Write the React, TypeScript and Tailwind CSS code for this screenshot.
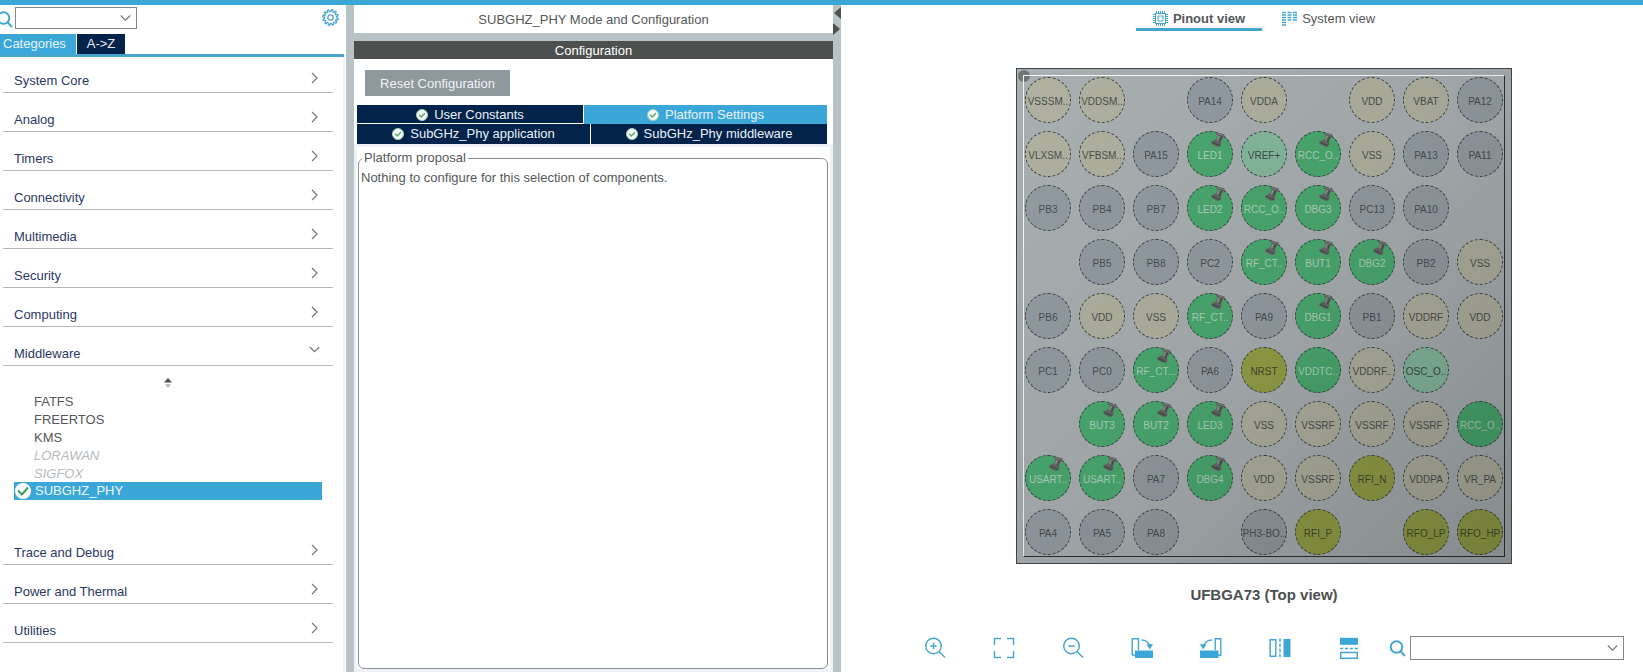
import { useState } from 'react';

const font = "font-['Liberation_Sans',Arial,sans-serif]";

const categoriesBefore = ['System Core', 'Analog', 'Timers', 'Connectivity', 'Multimedia', 'Security', 'Computing'];
const categoriesAfter = ['Trace and Debug', 'Power and Thermal', 'Utilities'];

// kind: g = gpio, p = power, a = assigned, s = special, n = no mode, trailing * = pinned
const pinRows = [
    ['p VSSSM..', 'p VDDSM..', '', 'g PA14', 'p VDDA', '', 'p VDD', 'p VBAT', 'g PA12'],
    ['p VLXSM..', 'p VFBSM..', 'g PA15', 'a* LED1', 's VREF+', 'a* RCC_O..', 'p VSS', 'g PA13', 'g PA11'],
    ['g PB3', 'g PB4', 'g PB7', 'a* LED2', 'a* RCC_O..', 'a* DBG3', 'g PC13', 'g PA10', ''],
    ['', 'g PB5', 'g PB8', 'g PC2', 'a* RF_CT..', 'a* BUT1', 'a* DBG2', 'g PB2', 'p VSS'],
    ['g PB6', 'p VDD', 'p VSS', 'a* RF_CT..', 'g PA9', 'a* DBG1', 'g PB1', 'p VDDRF', 'p VDD'],
    ['g PC1', 'g PC0', 'a* RF_CT...', 'g PA6', 'n NRST', 'a VDDTC..', 'p VDDRF..', 's OSC_O..', ''],
    ['', 'a* BUT3', 'a* BUT2', 'a* LED3', 'p VSS', 'p VSSRF', 'p VSSRF', 'p VSSRF', 'a RCC_O..'],
    ['a* USART..', 'a* USART..', 'g PA7', 'a* DBG4', 'p VDD', 'p VSSRF', 'n RFI_N', 'p VDDPA', 'p VR_PA'],
    ['g PA4', 'g PA5', 'g PA8', '', 'g PH3-BO..', 'n RFI_P', '', 'n RFO_LP', 'n RFO_HP'],
];

const pinStyles: Record<string, string> = {
    g: 'bg-[#99a2a9] text-[#4b5256]',
    p: 'bg-[#b7b8a6] text-[#50534e]',
    a: 'bg-[#4db073] text-[#b9d8c4]',
    s: 'bg-[#8ac0a3] text-[#3f5148]',
    n: 'bg-[#9aa64a] text-[#484e30]',
};

function gearPath(teeth: number) {
    const points: string[] = [];
    for (let i = 0; i < teeth; i++) {
        const start = (i / teeth) * Math.PI * 2;
        const step = (Math.PI * 2) / teeth;
        [
            [0.08, 6],
            [0.22, 7.8],
            [0.58, 7.8],
            [0.72, 6],
        ].forEach(([t, r]) => {
            const angle = start + step * t;
            points.push(`${(8.5 + Math.cos(angle) * r).toFixed(2)} ${(8.5 + Math.sin(angle) * r).toFixed(2)}`);
        });
    }
    return `M${points.join('L')}Z`;
}

function SearchIcon() {
    return (
        <svg viewBox="0 0 17 17" className="size-[17px] shrink-0" fill="none" stroke="#45a5cf" strokeWidth="2">
            <circle cx="7.5" cy="7" r="5.8" />
            <path d="M11.6 11.4 16 16" />
        </svg>
    );
}

function ChevronRight() {
    return (
        <svg viewBox="0 0 7 12" className="h-3 w-[7px]" fill="none" stroke="#777" strokeWidth="1.2">
            <path d="M1 1l5 5-5 5" />
        </svg>
    );
}

function ChevronDown() {
    return (
        <svg viewBox="0 0 11 7" className="h-[7px] w-[11px]" fill="none" stroke="#777" strokeWidth="1.2">
            <path d="M.8 1l4.7 4.7L10.2 1" />
        </svg>
    );
}

function Combo({ label, className }: { label: string; className: string }) {
    return (
        <div className={`relative ${className}`}>
            <select aria-label={label} className="block size-full appearance-none border border-[#858585] bg-white px-2 outline-none">
                <option value=""></option>
            </select>
            <span className="pointer-events-none absolute top-1/2 right-1.5 -translate-y-1/2">
                <ChevronDown />
            </span>
        </div>
    );
}

function CheckBadge() {
    return (
        <svg viewBox="0 0 12 12" className="size-3 shrink-0">
            <circle cx="6" cy="6" r="5.5" fill="#f4fbf4" stroke="#9fd0b4" strokeWidth="1" />
            <path d="M3.2 5.8l2.1 2.2 3.6-3.8" fill="none" stroke="#5aa66c" strokeWidth="1.4" />
        </svg>
    );
}

function Tack() {
    return (
        <svg viewBox="0 0 16 17" className="absolute top-0 left-[22px] h-[17px] w-4">
            <path d="M5.5 13 3 16.6" stroke="#8a9a91" strokeWidth="1" />
            <path d="M6.4.4 14.4 2.2 14.6 4.4 12.9 5.4 11 9.6 11.4 12.4 10 14.8 6.4 14.6 1.2 11.4 1.4 9.4 4 8.2 6.4 7.2 7.8 3.8 6 2.2Z" fill="#676a68" />
            <path d="M9.2 4 7.4 8.4" stroke="#9a9d9b" strokeWidth="1.4" />
            <path d="M7.2 1.6 13.4 3.2" stroke="#858886" strokeWidth="1" />
            <path d="M11.6 4.8 9.6 9.8M2.2 10.4 9.6 13.6" stroke="#4d504f" strokeWidth="1.2" />
        </svg>
    );
}

function Pin({ pin }: { pin: string }) {
    if (!pin) return <span />;
    const [kind, name] = pin.split(' ');
    return (
        <button
            className={`relative flex size-[46px] items-center justify-center rounded-full border border-dashed border-[#3b4145] pt-0.5 text-[10px] whitespace-nowrap ${pinStyles[kind[0]]}`}
        >
            {name}
            {kind.endsWith('*') && <Tack />}
        </button>
    );
}

function CategoryRow({ name, open = false }: { name: string; open?: boolean }) {
    return (
        <button className="flex h-7 w-full items-center justify-between border-b border-[#b4b8bb] pr-[15px] pl-[11px] text-left text-[#2c3763]">
            <span className="pt-1">{name}</span>
            <span className={`flex justify-center ${open ? '-mr-0.5 pb-1' : 'pb-0.5'}`}>{open ? <ChevronDown /> : <ChevronRight />}</span>
        </button>
    );
}

function Sidebar() {
    const items = ['FATFS', 'FREERTOS', 'KMS'];
    const disabled = ['LORAWAN', 'SIGFOX'];

    return (
        <aside className="flex w-[346px] shrink-0 flex-col">
            <div className="flex h-[29px] items-start pt-0.5 pr-[7px]">
                <span className="-ml-1 flex w-[19px] pt-1">
                    <SearchIcon />
                </span>
                <Combo label="Search component" className="h-[22px] w-[122px]" />
                <button aria-label="Settings" className="ml-auto pt-0.5">
                    <svg viewBox="0 0 17 17" className="size-[17px]" fill="none" stroke="#45a5cf" strokeWidth="1.2">
                        <path d={gearPath(12)} />
                        <circle cx="8.5" cy="8.5" r="2.7" />
                    </svg>
                </button>
            </div>
            <div className="mr-0.5 flex gap-px border-b-3 border-[#45a5cf]">
                <button className="h-5 w-[76px] bg-[#3ba7d9] pr-3 pl-[3px] text-left text-[#e8f6fc]">Categories</button>
                <button className="h-5 w-12 bg-[#03234b] text-[#e8eef5]">{'A->Z'}</button>
            </div>

            <nav className="mr-px flex flex-1 flex-col gap-[11px] border-r-2 border-[#eff3f6] pt-2 pr-2.5 pl-[3px]">
                {categoriesBefore.map((name) => (
                    <CategoryRow key={name} name={name} />
                ))}
                <CategoryRow name="Middleware" open />
                <div className="pr-[11px] pb-[26px] pl-[11px] text-[#55585a]">
                    <button aria-label="Sort" className="flex h-[15px] w-full justify-center pt-px">
                        <svg viewBox="0 0 8 10" className="h-2.5 w-2">
                            <path d="M0 4.4 4 0l4 4.4Z" fill="#4d4d4d" />
                            <path d="M1 6.2h6L4 10Z" fill="#b9b9b9" />
                        </svg>
                    </button>
                    <ul className="leading-[18px]">
                        {items.map((name) => (
                            <li key={name} className="h-[18px] pt-px pl-5">
                                {name}
                            </li>
                        ))}
                        {disabled.map((name) => (
                            <li key={name} className="h-[18px] pt-px pl-5 text-[#b4babe] italic">
                                {name}
                            </li>
                        ))}
                        <li className="flex items-center gap-1 bg-[#3ba7d9] pl-px text-[#eaf7fd]">
                            <svg viewBox="0 0 16 16" className="size-4">
                                <circle cx="8" cy="8" r="8" fill="#fff" />
                                <path d="M3 7.5l4 4 6-7" fill="none" stroke="#3fa35f" strokeWidth="2.2" />
                            </svg>
                            SUBGHZ_PHY
                        </li>
                    </ul>
                </div>
                {categoriesAfter.map((name) => (
                    <CategoryRow key={name} name={name} />
                ))}
            </nav>
        </aside>
    );
}

function ConfigTab({ label, className }: { label: string; className: string }) {
    return (
        <button className={`flex items-center justify-center gap-1.5 ${className}`}>
            <CheckBadge />
            {label}
        </button>
    );
}

function ConfigPanel() {
    return (
        <main className="flex w-[479px] shrink-0 flex-col">
            <h1 className="h-7 pt-px text-center leading-7 text-[#55585a]">SUBGHZ_PHY Mode and Configuration</h1>
            <h2 className="h-[26px] border-t-8 border-[#b8c3c6] bg-[#4d504f] pt-px text-center leading-[18px] text-white">Configuration</h2>
            <div className="px-[11px] pt-[11px] pb-[9px]">
                <button className="h-[26px] w-[145px] bg-[#8f989c] pt-px text-[#eef1f2]">Reset Configuration</button>
            </div>
            <div className="flex flex-col pr-1.5 pl-[3px] text-[#eaf1f8]">
                <div className="flex h-[19px]">
                    <ConfigTab label="User Constants" className="w-[227px] border-r border-b border-white bg-[#03234b] pt-px" />
                    <ConfigTab label="Platform Settings" className="flex-1 bg-[#3ba7d9] pt-px" />
                </div>
                <div className="flex h-5">
                    <ConfigTab label="SubGHz_Phy application" className="w-[234px] border-r border-white bg-[#03234b] pb-px" />
                    <ConfigTab label="SubGHz_Phy middleware" className="flex-1 bg-[#03234b] pb-px" />
                </div>
            </div>
            <div className="flex flex-1 flex-col bg-[#eef1f5] p-[3px]">
                <div className="flex flex-1 flex-col bg-white pt-0.5 pr-0.5 pl-px text-[#55585a]">
                    <fieldset className="flex-1 rounded-md border border-[#8c8f91] px-0.5">
                        <legend className="ml-px px-0.5 leading-[18px]">Platform proposal</legend>
                        <p className="pt-0.5 leading-[18px]">Nothing to configure for this selection of components.</p>
                    </fieldset>
                </div>
            </div>
        </main>
    );
}

function Toolbar() {
    return (
        <div className="flex h-6 items-center justify-end self-stretch pr-[19px]">
            <div className="flex items-center gap-[47px]">
                <button aria-label="Zoom in">
                    <svg viewBox="0 0 22 22" className="size-[22px]" fill="none" stroke="#45a5cf" strokeWidth="1.4">
                        <circle cx="9.5" cy="9" r="7.8" />
                        <path d="M15 14.5 21 20.5M6.3 9h6.4M9.5 5.8v6.4" />
                    </svg>
                </button>
                <button aria-label="Best fit">
                    <svg viewBox="0 0 22 22" className="size-[22px]" fill="none" stroke="#45a5cf" strokeWidth="1.4">
                        <path d="M8 1.5H1.5V8M14 1.5h6.5V8M8 20.5H1.5V14M14 20.5h6.5V14" />
                    </svg>
                </button>
                <button aria-label="Zoom out">
                    <svg viewBox="0 0 22 22" className="size-[22px]" fill="none" stroke="#45a5cf" strokeWidth="1.4">
                        <circle cx="9.5" cy="9" r="7.8" />
                        <path d="M15 14.5 21 20.5M6.3 9h6.4" />
                    </svg>
                </button>
                <button aria-label="Rotate right">
                    <svg viewBox="0 0 22 22" className="size-[22px]" fill="none" stroke="#45a5cf" strokeWidth="1.4">
                        <path d="M4 18H1.2V1.7h6.3V13" />
                        <path d="M10.5 3c4 0 7 2 8 6" />
                        <path d="M15.5 7.5 22 7l-3 5.5Z" fill="#45a5cf" stroke="none" />
                        <path d="M4 13.5h18V21H4Z" fill="#3ba7d9" stroke="none" />
                    </svg>
                </button>
                <button aria-label="Rotate left">
                    <svg viewBox="0 0 22 22" className="size-[22px]" fill="none" stroke="#45a5cf" strokeWidth="1.4">
                        <path d="M18 18.3h2.8V1.7h-5.6V13" />
                        <path d="M12 3c-4 0-7 2-8 6" />
                        <path d="M6.5 7.5 0 7l3 5.5Z" fill="#45a5cf" stroke="none" />
                        <path d="M0 13.5h18.5V21H0Z" fill="#3ba7d9" stroke="none" />
                    </svg>
                </button>
                <button aria-label="Flip horizontally">
                    <svg viewBox="0 0 22 22" className="size-[22px]" fill="none" stroke="#45a5cf" strokeWidth="1.4">
                        <path d="M1.2 2.7h5.6v16.6H1.2Z" />
                        <path d="M11 1.5v19" strokeDasharray="3.5 1.6" />
                        <path d="M14.5 2h7v18h-7Z" fill="#3ba7d9" stroke="none" />
                    </svg>
                </button>
                <button aria-label="Flip vertically">
                    <svg viewBox="0 0 22 22" className="size-[22px]" fill="none" stroke="#45a5cf" strokeWidth="1.4">
                        <path d="M2 .8h18v7H2Z" fill="#3ba7d9" stroke="none" />
                        <path d="M2 11.5h18" strokeDasharray="3.2 1.7" />
                        <path d="M2.7 15.5h16.6v5.8H2.7Z" />
                    </svg>
                </button>
            </div>
            <div className="ml-[29px] flex items-center gap-1">
                <SearchIcon />
                <Combo label="Search pin" className="h-6 w-[214px]" />
            </div>
        </div>
    );
}

function PinoutPanel() {
    const [view, setView] = useState('pinout');
    const tab = 'flex h-[26px] items-center gap-[5px] border-b-3 pt-1';

    return (
        <section className="flex flex-1 flex-col items-center pl-11">
            <div className="flex gap-[3px] text-[#55585a]">
                <button
                    onClick={() => setView('pinout')}
                    className={`${tab} px-[17px] ${view === 'pinout' ? 'border-[#45a5cf] font-bold' : 'border-transparent'}`}
                >
                    <svg viewBox="0 0 15 15" className="size-[15px]" fill="none" stroke="#45a5cf">
                        <path d="M3.5 0v15M5.5 0v15M7.5 0v15M9.5 0v15M11.5 0v15M0 3.5h15M0 5.5h15M0 7.5h15M0 9.5h15M0 11.5h15" />
                        <path d="M2.5 2.5h10v10h-10Z" fill="#fff" />
                        <path d="M5 5h5v5H5Z" />
                    </svg>
                    Pinout view
                </button>
                <button
                    onClick={() => setView('system')}
                    className={`${tab} px-[17px] ${view === 'system' ? 'border-[#45a5cf] font-bold' : 'border-transparent'}`}
                >
                    <svg viewBox="0 0 15 15" className="size-[15px]" fill="none" stroke="#45a5cf" strokeWidth="1.4">
                        <path d="M0 1.5h4M5.5 1.5h4M11 1.5h4M0 4h4M5.5 4h4M11 4h4M0 6.5h4M5.5 6.5h4M11 6.5h4M0 9h4M5.5 9h4M11 9h4M0 11.5h4M0 14h4" />
                    </svg>
                    System view
                </button>
            </div>

            <div className="relative mt-[37px] border border-[#3f4446] bg-[#b0b7b9] p-1.5">
                <span className="absolute top-px left-px size-3 rounded-full bg-[#74797a]" />
                <div className="relative grid grid-cols-9 gap-2 border border-t-white border-r-[#2f3335] border-b-[#2f3335] border-l-white p-px">
                    {pinRows.flat().map((pin, i) => (
                        <Pin key={i} pin={pin} />
                    ))}
                </div>
                {/* package shading */}
                <div className="pointer-events-none absolute inset-0 bg-linear-to-br from-black/4 via-black/10 to-black/24" />
            </div>

            <p className="mt-[21px] mb-[31px] text-[15px] leading-5 font-bold text-[#4c4f50]">UFBGA73 (Top view)</p>
            <Toolbar />
        </section>
    );
}

export default function App() {
    return (
        <div className={`flex min-h-screen flex-col border-t-5 border-[#3ba7d6] bg-white text-[13px] ${font}`}>
            <div className="flex flex-1">
                <Sidebar />
                <div className="w-2 shrink-0 bg-[#b8c3c6]" />
                <ConfigPanel />
                <div className="w-2 shrink-0 bg-[#b8c3c6] pt-0.5">
                    <svg viewBox="0 0 8 28" className="h-7 w-2" fill="#4d504f">
                        <path d="M8 0v12L1 6ZM0 16v12l7-6Z" />
                    </svg>
                </div>
                <PinoutPanel />
            </div>
        </div>
    );
}
